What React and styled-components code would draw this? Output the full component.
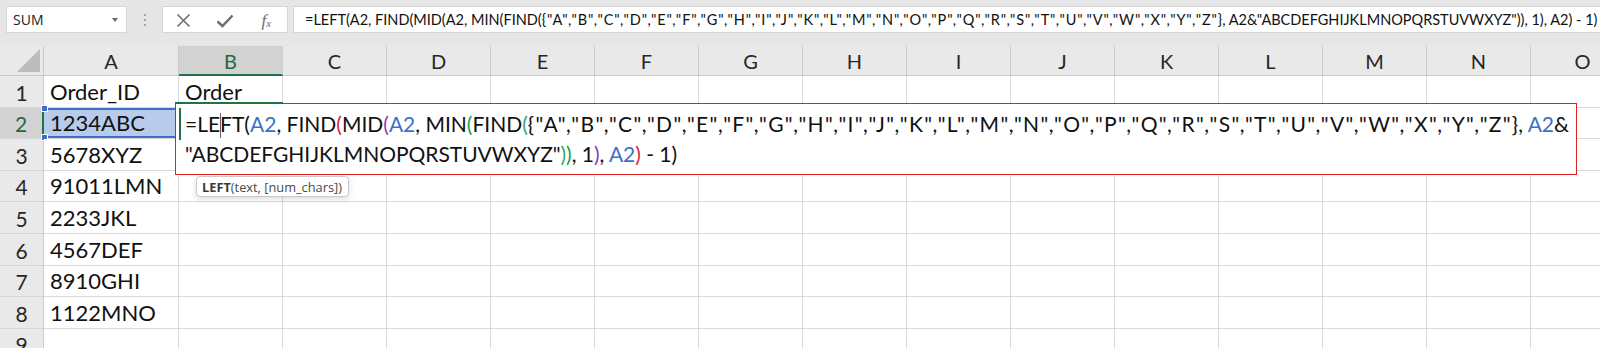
import React, { useLayoutEffect, useRef, useState } from "react";
import styled, { createGlobalStyle } from "styled-components";

const GlobalStyle = createGlobalStyle`
  html, body {
    margin: 0;
    padding: 0;
    background: #ffffff;
    overflow: hidden;
  }
  body {
    font-family: Lato, "Liberation Sans", sans-serif;
  }
`;

const GREEN = "#217346";
const REF_BLUE = "#3b6fc9";

const Page = styled.div`
  width: 1600px;
  height: 348px;
  overflow: hidden;
  display: flex;
  flex-direction: column;
  background: #fff;
`;

const Toolbar = styled.div`
  height: 46px;
  flex: none;
  box-sizing: border-box;
  background: #e6e6e6;
  display: flex;
  align-items: flex-start;
  padding: 6px 0 0 6px;
`;

const NameBox = styled.div`
  width: 121px;
  height: 27px;
  box-sizing: border-box;
  background: #fff;
  border: 1px solid #d6d6d6;
  display: flex;
  align-items: center;
  justify-content: space-between;
  padding: 0 8px 0 6px;
  font-family: "Open Sans", sans-serif;
  font-size: 14px;
  color: #222;
`;

const Caret = styled.span`
  width: 0;
  height: 0;
  border-left: 3.5px solid transparent;
  border-right: 3.5px solid transparent;
  border-top: 4px solid #6a6a6a;
`;

const Grip = styled.div`
  width: 35px;
  height: 27px;
  display: flex;
  flex-direction: column;
  align-items: center;
  justify-content: center;
  gap: 3px;
`;

const GripDot = styled.span`
  width: 2px;
  height: 2px;
  background: #a3a3a3;
`;

const FxButtons = styled.div`
  width: 126px;
  height: 27px;
  box-sizing: border-box;
  background: #fff;
  border: 1px solid #d6d6d6;
  display: flex;
  align-items: center;
`;

const IconSlot = styled.span`
  width: 42px;
  display: flex;
  justify-content: center;
  align-items: center;
  color: #6e6e6e;
  padding-top: 2px;
`;

const FxLabel = styled.span`
  font-family: "Liberation Serif", serif;
  font-style: italic;
  font-size: 17px;
  color: #6e6e6e;
  sub {
    font-size: 11px;
    vertical-align: -1px;
  }
`;

const FormulaInput = styled.div`
  flex: 1;
  height: 27px;
  margin-left: 5px;
  box-sizing: border-box;
  background: #fff;
  border: 1px solid #d6d6d6;
  border-right: none;
  display: flex;
  align-items: center;
  padding-left: 11px;
  overflow: hidden;
`;

const FormulaText = styled.span`
  display: inline-block;
  flex: none;
  font-size: 14.5px;
  color: #111;
  white-space: pre;
`;

const Sheet = styled.div`
  position: relative;
  flex: 1;
  overflow: hidden;
  display: grid;
  grid-template-columns: 44px 135px repeat(14, 104px);
  grid-template-rows: 30px repeat(9, 31.6px);
`;

const Corner = styled.div`
  background: #e9e9e9;
  border-right: 1px solid #cacaca;
  border-bottom: 1px solid #cacaca;
  box-sizing: border-box;
  display: flex;
  align-items: flex-end;
  justify-content: flex-end;
  padding: 0 3px 3px 0;
`;

const CornerTriangle = styled.span`
  width: 0;
  height: 0;
  border-left: 23px solid transparent;
  border-bottom: 23px solid #bcbcbc;
`;

const ColHead = styled.div`
  box-sizing: border-box;
  background: ${(p) => (p.$active ? "#d2d2d2" : "#e9e9e9")};
  border-right: 1px solid #cacaca;
  border-bottom: ${(p) => (p.$active ? `2px solid ${GREEN}` : "1px solid #cacaca")};
  display: flex;
  align-items: center;
  justify-content: center;
  padding-top: ${(p) => (p.$active ? "1px" : "0")};
  font-size: 20px;
  color: ${(p) => (p.$active ? "#1d6a3f" : "#262626")};
`;

const RowHead = styled.div`
  box-sizing: border-box;
  background: ${(p) => (p.$active ? "#d2d2d2" : "#e9e9e9")};
  border-right: ${(p) => (p.$active ? `2px solid ${GREEN}` : "1px solid #cacaca")};
  border-bottom: 1px solid #d6d6d6;
  display: flex;
  align-items: flex-end;
  justify-content: center;
  padding-bottom: 2px;
  font-size: 21px;
  color: ${(p) => (p.$active ? "#1d6a3f" : "#262626")};
`;

const Cell = styled.div`
  position: relative;
  box-sizing: border-box;
  border-right: 1px solid #dadada;
  border-bottom: 1px solid #dadada;
  background: ${(p) => (p.$selected ? "#b8cbea" : "#fff")};
  box-shadow: ${(p) => (p.$selected ? `inset 0 2px 0 ${REF_BLUE}, inset 0 -2px 0 ${REF_BLUE}` : "none")};
  display: flex;
  align-items: flex-end;
  padding: 0 0 2px 6px;
  font-size: 22px;
  color: #111;
  white-space: nowrap;
`;

const Handle = styled.span`
  position: absolute;
  width: 5px;
  height: 5px;
  background: ${REF_BLUE};
  border: 1px solid #fff;
  left: ${(p) => (p.$right ? "auto" : "-3px")};
  right: ${(p) => (p.$right ? "-4px" : "auto")};
  top: ${(p) => (p.$bottom ? "auto" : "-3px")};
  bottom: ${(p) => (p.$bottom ? "-3px" : "auto")};
`;

const EditBox = styled.div`
  position: absolute;
  left: 175px;
  top: 57px;
  width: 1402px;
  height: 72px;
  box-sizing: border-box;
  border: 1px solid #e02020;
  background: #fff;
  padding: 5px 0 0 9px;
  display: flex;
  flex-direction: column;
  align-items: flex-start;
  font-size: 21px;
  line-height: 30px;
  color: #111;
  z-index: 2;
`;

const EditLine = styled.span`
  display: inline-block;
  white-space: pre;
`;

const ActiveTop = styled.span`
  position: absolute;
  left: -1px;
  top: -2px;
  width: 108px;
  height: 2px;
  background: ${GREEN};
`;

const ActiveLeft = styled.span`
  position: absolute;
  left: 3px;
  top: 4px;
  width: 2px;
  height: 32px;
  background: ${GREEN};
`;

const TextCaret = styled.span`
  display: inline-block;
  width: 1px;
  height: 25px;
  margin: 0 -0.5px;
  vertical-align: -6px;
  background: #666;
`;

const Tok = styled.span`
  color: ${(p) => p.$c || "inherit"};
`;

const Punct = styled.span``;

const Tooltip = styled.div`
  position: absolute;
  left: 196px;
  top: 130px;
  height: 21px;
  box-sizing: border-box;
  padding: 0 6px 0 5px;
  display: flex;
  align-items: center;
  background: #fff;
  border: 1px solid #c9c9c9;
  border-radius: 4px;
  box-shadow: 0 2px 6px rgba(0, 0, 0, 0.14);
  font-family: "Open Sans", sans-serif;
  font-size: 12.8px;
  color: #4a4a4a;
  white-space: pre;
  z-index: 3;
  b {
    font-weight: 700;
    color: #3a3a3a;
  }
`;

const LETTERS = "ABCDEFGHIJKLMNOPQRSTUVWXYZ";
const COLUMNS = "ABCDEFGHIJKLMNO".split("");

const RED = "#d3264a";
const PURPLE = "#8b3db6";
const MINT = "#17a150";
const TEAL = "#3aa37a";

const rows = [
  ["Order_ID", "Order"],
  ["1234ABC", ""],
  ["5678XYZ", ""],
  ["91011LMN", ""],
  ["2233JKL", ""],
  ["4567DEF", ""],
  ["8910GHI", ""],
  ["1122MNO", ""],
  ["", ""],
];

// Lato's quotes and commas are narrower than Calibri's: measure the line once
// and spread the missing width over the array's punctuation.
const usePunctFit = (target) => {
  const ref = useRef(null);
  const [gap, setGap] = useState(0);
  useLayoutEffect(() => {
    const el = ref.current;
    if (!el) return;
    const w = el.getBoundingClientRect().width;
    const n = el.querySelectorAll("[data-p]").length;
    if (n) setGap(Math.max(-1, (target - w) / (2 * n)));
  }, [target]);
  return [ref, gap];
};

const useSpacingFit = (target, chars) => {
  const ref = useRef(null);
  const [ls, setLs] = useState(0);
  useLayoutEffect(() => {
    const el = ref.current;
    if (!el) return;
    const w = el.getBoundingClientRect().width;
    setLs((target - w) / chars);
  }, [target, chars]);
  return [ref, ls];
};

const ArrayLit = ({ gap }) => {
  const m = { margin: `0 ${gap}px` };
  return (
    <>
      {"{"}
      {LETTERS.split("").map((l, i) => (
        <React.Fragment key={l}>
          <Punct data-p style={m}>"</Punct>
          {l}
          <Punct data-p style={m}>"</Punct>
          {i < LETTERS.length - 1 && (
            <Punct data-p style={m}>
              ,
            </Punct>
          )}
        </React.Fragment>
      ))}
      {"}"}
    </>
  );
};

const CancelIcon = () => (
  <svg width="15" height="15" viewBox="0 0 15 15">
    <path d="M1.5 1.5 L13.5 13.5 M13.5 1.5 L1.5 13.5" stroke="currentColor" strokeWidth="1.6" fill="none" />
  </svg>
);

const CheckIcon = () => (
  <svg width="18" height="14" viewBox="0 0 18 14">
    <path d="M1.5 7.5 L6.5 12 L16.5 1.5" stroke="currentColor" strokeWidth="2.4" fill="none" />
  </svg>
);

const LINE2 = `"${LETTERS}")), 1), A2) - 1)`;

const App = () => {
  const [barRef, barGap] = usePunctFit(1293);
  const [line1Ref, line1Gap] = usePunctFit(1386);
  const [line2Ref, line2Ls] = useSpacingFit(492, LINE2.length);

  return (
    <Page>
      <GlobalStyle />
      <Toolbar>
        <NameBox>
          SUM
          <Caret />
        </NameBox>
        <Grip>
          <GripDot />
          <GripDot />
          <GripDot />
        </Grip>
        <FxButtons>
          <IconSlot>
            <CancelIcon />
          </IconSlot>
          <IconSlot>
            <CheckIcon />
          </IconSlot>
          <IconSlot>
            <FxLabel>
              f<sub>x</sub>
            </FxLabel>
          </IconSlot>
        </FxButtons>
        <FormulaInput>
          <FormulaText ref={barRef}>
            {"=LEFT(A2, FIND(MID(A2, MIN(FIND("}
            <ArrayLit gap={barGap} />
            {`, A2&"${LETTERS}")), 1), A2) - 1)`}
          </FormulaText>
        </FormulaInput>
      </Toolbar>

      <Sheet>
        <Corner>
          <CornerTriangle />
        </Corner>
        {COLUMNS.map((c) => (
          <ColHead key={c} $active={c === "B"}>
            {c}
          </ColHead>
        ))}
        {rows.map((r, i) => (
          <React.Fragment key={i}>
            <RowHead $active={i === 1}>{i + 1}</RowHead>
            {COLUMNS.map((c, j) => (
              <Cell key={c} $selected={i === 1 && j === 0}>
                {j < 2 ? r[j] : ""}
                {i === 1 && j === 0 && (
                  <>
                    <Handle />
                    <Handle $bottom />
                    <Handle $right />
                    <Handle $right $bottom />
                  </>
                )}
              </Cell>
            ))}
          </React.Fragment>
        ))}

        <EditBox>
          <ActiveTop />
          <ActiveLeft />
          <EditLine ref={line1Ref}>
            =LE<TextCaret />FT(<Tok $c={REF_BLUE}>A2</Tok>, FIND<Tok $c={RED}>(</Tok>MID
            <Tok $c={PURPLE}>(</Tok>
            <Tok $c={REF_BLUE}>A2</Tok>, MIN<Tok $c={MINT}>(</Tok>FIND<Tok $c={TEAL}>(</Tok>
            <ArrayLit gap={line1Gap} />
            {", "}
            <Tok $c={REF_BLUE}>A2</Tok>&amp;
          </EditLine>
          <EditLine ref={line2Ref} style={{ letterSpacing: `${line2Ls}px` }}>
            {`"${LETTERS}"`}
            <Tok $c={TEAL}>)</Tok>
            <Tok $c={MINT}>)</Tok>, 1<Tok $c={PURPLE}>)</Tok>, <Tok $c={REF_BLUE}>A2</Tok>
            <Tok $c={RED}>)</Tok> - 1)
          </EditLine>
        </EditBox>

        <Tooltip>
          <b>LEFT</b>(text, [num_chars])
        </Tooltip>
      </Sheet>
    </Page>
  );
};

export default App;
